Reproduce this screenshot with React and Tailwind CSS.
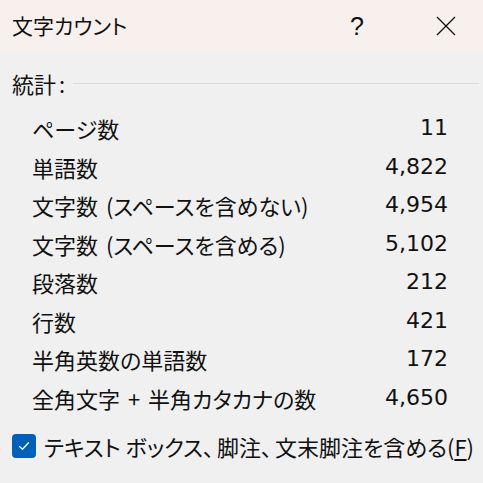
import React from 'react';

const rows = [
  ['ページ数', '11'],
  ['単語数', '4,822'],
  ['文字数 (スペースを含めない)', '4,954'],
  ['文字数 (スペースを含める)', '5,102'],
  ['段落数', '212'],
  ['行数', '421'],
  ['半角英数の単語数', '172'],
  ['全角文字 + 半角カタカナの数', '4,650'],
];

export default function App() {
  return (
    <div className="w-[483px] h-[483px] bg-[#f0f0f0] text-[#111] font-['Noto_Sans_CJK_JP',sans-serif] [font-feature-settings:'palt'] overflow-hidden">
      {/* タイトルバー */}
      <div className="h-[52px] bg-[#f8f0ed] flex items-center pl-[12px] pr-[14px]">
        <div className="text-[21px] leading-none -mt-[2px]">文字カウント</div>
        <div className="ml-auto w-[46px] text-center text-[25px] leading-none font-['Liberation_Sans',sans-serif]">?</div>
        <div className="ml-[43px] w-[46px] flex justify-center">
          <svg width="20" height="20" viewBox="0 0 20 20">
            <path d="M1 1 L19 19 M19 1 L1 19" stroke="#111" strokeWidth="1.3" fill="none" />
          </svg>
        </div>
      </div>

      {/* 統計 */}
      <div className="pt-[12px]">
        <div className="h-[38px] flex items-center pl-[12px] pr-[4px]">
          <span className="text-[22px] leading-none">統計<span className="ml-[3px]">:</span></span>
          <div className="flex-1 h-px bg-[#d9d9d9] ml-[8px]" />
        </div>

        <div className="mt-[7px]">
          {rows.map(([label, value]) => (
            <div key={label} className="h-[38.5px] flex items-center justify-between pl-[32px] pr-[35px]">
              <span className="text-[22px] leading-none [word-spacing:3px]">{label}</span>
              <span className="text-[22px] leading-none font-['DejaVu_Sans',sans-serif]">{value}</span>
            </div>
          ))}
        </div>

        {/* チェックボックス */}
        <div className="mt-[10px] h-[38px] flex items-center pl-[12px]">
          <div className="w-[24px] h-[24px] rounded-[4px] bg-[#005fb8] flex items-center justify-center">
            <svg width="14" height="14" viewBox="0 0 14 14">
              <path d="M2.5 7.5 L5.5 10.2 L11.5 3.8" stroke="#fff" strokeWidth="1.3" fill="none" strokeLinecap="round" strokeLinejoin="round" />
            </svg>
          </div>
          <span className="ml-[8px] text-[22px] leading-none whitespace-nowrap">
            テキスト ボックス<span className="mr-[3px]">、</span>脚注<span className="mr-[3px]">、</span>文末脚注を含める(<span className="underline underline-offset-[3px]">F</span>)
          </span>
        </div>
      </div>
    </div>
  );
}
